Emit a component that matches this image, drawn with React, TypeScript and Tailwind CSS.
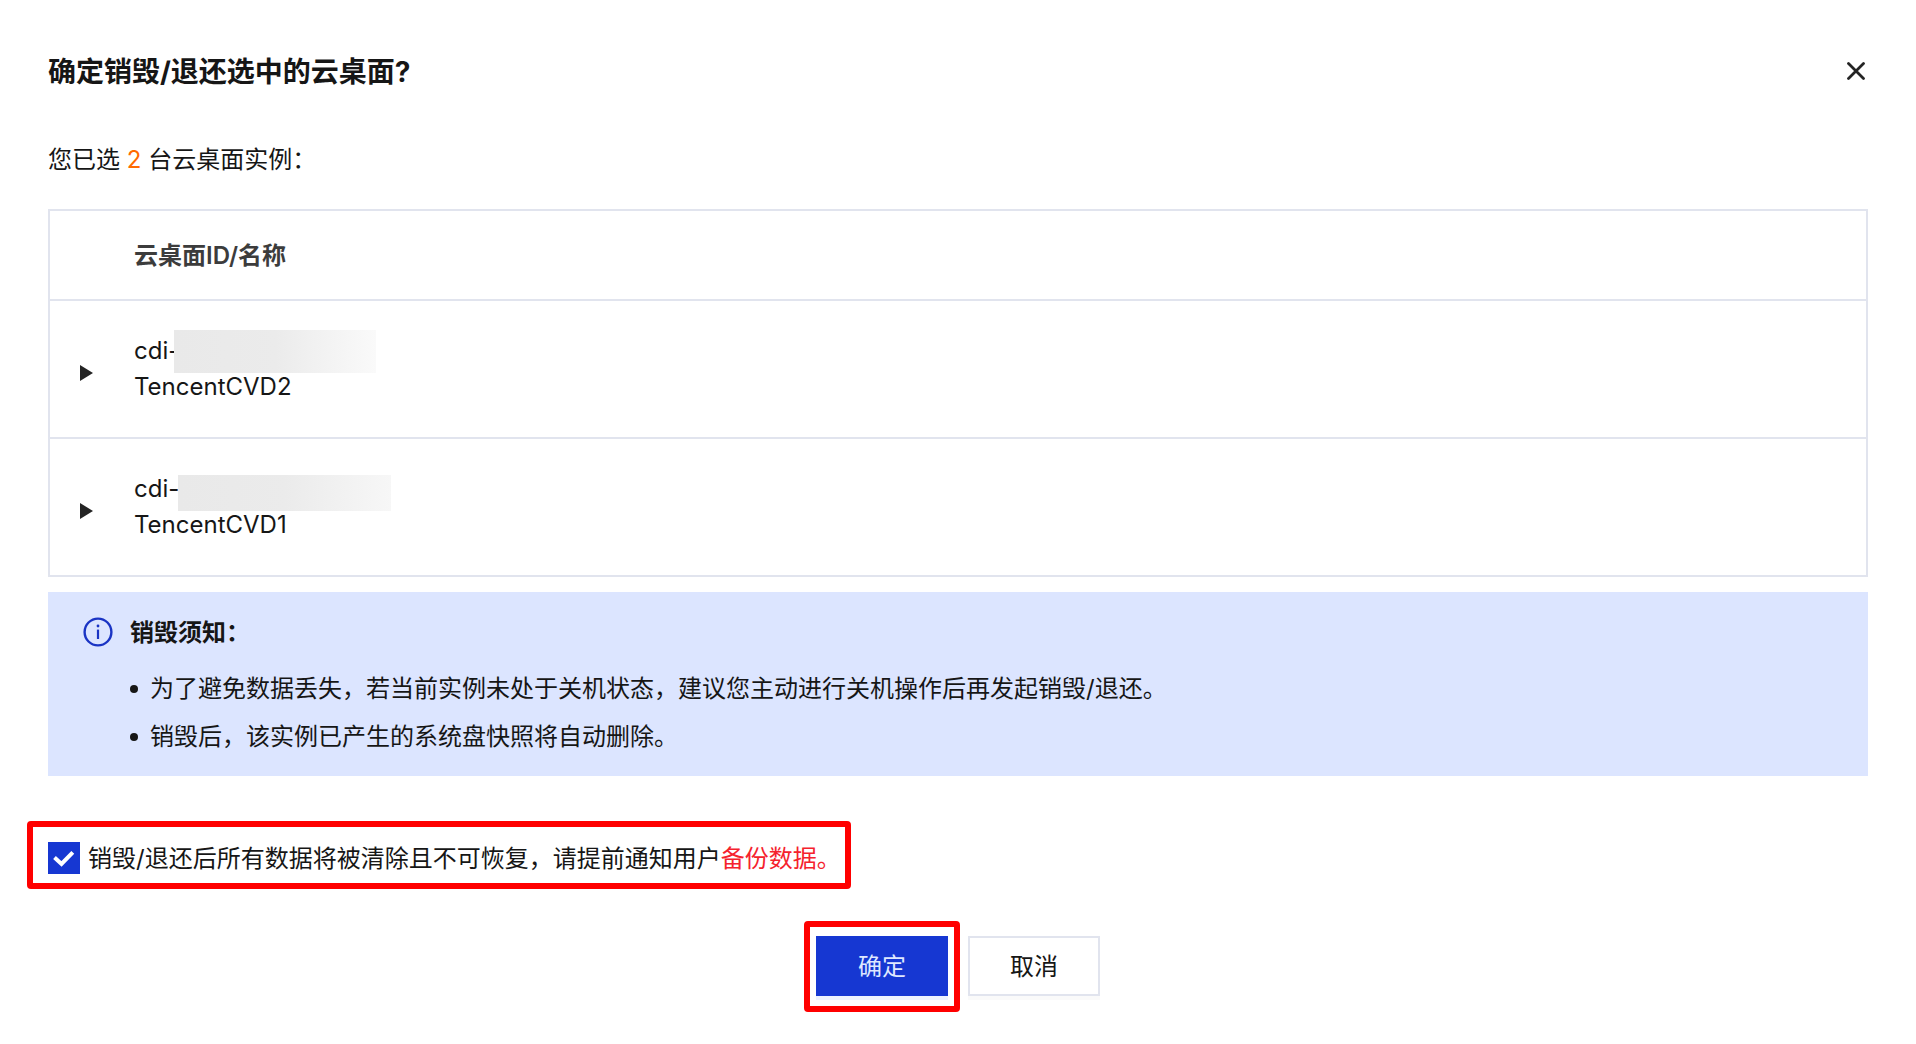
import { useState } from "react";

type Desktop = { prefix: string; name: string; mask: string };

const desktops: Desktop[] = [
  {
    prefix: "cdi-",
    name: "TencentCVD2",
    mask: "left-10 -top-[3px] h-[43px] w-[202px] from-[#e9e9e9] via-[#ebebeb] to-[#fafafa]",
  },
  {
    prefix: "cdi-",
    name: "TencentCVD1",
    mask: "left-11 top-1 h-9 w-[213px] from-[#e9e9e9] via-[#ebebeb] to-[#f7f7f7]",
  },
];

const notices = [
  "为了避免数据丢失，若当前实例未处于关机状态，建议您主动进行关机操作后再发起销毁/退还。",
  "销毁后，该实例已产生的系统盘快照将自动删除。",
];

function DesktopRow({ prefix, name, mask }: Desktop) {
  return (
    <tr className="border-t-2 border-[#e1e4ee]">
      <td className="w-[84px] pt-10 pb-8 pl-[30px]">
        <button type="button" aria-label={`展开 ${name}`} className="block">
          <svg viewBox="0 0 13 16" className="h-4 w-[13px]" fill="#242424">
            <path d="M0 0 13 8 0 16Z" />
          </svg>
        </button>
      </td>
      <td className="py-8">
        <div className="relative">
          {prefix}
          <span className={`absolute bg-linear-to-r ${mask}`} />
        </div>
        <div>{name}</div>
      </td>
    </tr>
  );
}

export default function App() {
  const [checked, setChecked] = useState(true);
  return (
    <main
      lang="zh-CN"
      className="bg-white px-12 pt-[50px] pb-8 font-['Inter','Noto_Sans_CJK_SC',sans-serif] text-2xl leading-9 text-[#161616]"
    >
      <header className="flex items-center justify-between">
        <h1 className="pt-0.5 text-[28px] leading-10 font-bold">确定销毁/退还选中的云桌面?</h1>
        <button type="button" aria-label="关闭" className="p-[3px]">
          <svg viewBox="0 0 18 18" className="size-[18px]" stroke="#242424" strokeWidth="2.8" strokeLinecap="round">
            <path d="M1.5 1.5 16.5 16.5M16.5 1.5 1.5 16.5" />
          </svg>
        </button>
      </header>

      <p className="mt-[50px]">
        您已选 <span className="text-[#ff6a00]">2</span> 台云桌面实例：
      </p>

      <div className="mt-[31px] border-2 border-[#e1e4ee]">
        <table className="w-full border-collapse text-left">
          <thead>
            <tr>
              <th className="w-[84px]" aria-label="展开" />
              <th className="pt-[27px] pb-[25px] font-semibold text-[#3c3c3c]">云桌面ID/名称</th>
            </tr>
          </thead>
          <tbody>
            {desktops.map((d) => (
              <DesktopRow key={d.name} {...d} />
            ))}
          </tbody>
        </table>
      </div>

      <section className="mt-[15px] flex gap-4 bg-[#dce5ff] pt-5 pb-[15px] pl-[34px]">
        <svg viewBox="0 0 32 32" className="mt-1 size-8 shrink-0" fill="none" stroke="#1a34c4">
          <circle cx="16" cy="16" r="13.4" strokeWidth="2.4" />
          <path d="M16 13.6V23" strokeWidth="2.2" />
          <circle cx="16" cy="10" r="1.4" fill="#1a34c4" stroke="none" />
        </svg>
        <div>
          <h2 className="leading-[42px] font-semibold">销毁须知：</h2>
          <ul className="mt-[11px]">
            {notices.map((n) => (
              <li key={n} className="flex items-center gap-3 leading-[48px]">
                <span className="size-2 rounded-full bg-[#161616]" />
                {n}
              </li>
            ))}
          </ul>
        </div>
      </section>

      <div className="mt-[63px] flex">
        <div className="relative">
          <label className="flex items-center gap-2 py-0.5">
            <span className="relative size-8">
              <input
                type="checkbox"
                checked={checked}
                onChange={(e) => setChecked(e.target.checked)}
                className="block size-8 appearance-none border-2 border-[#1637d2] bg-white checked:bg-[#1637d2]"
              />
              <svg viewBox="0 0 32 32" className="pointer-events-none absolute inset-0" fill="none" stroke="#fff" strokeWidth="4">
                <path d="M6.5 15.5 13.5 22 24.8 10.3" />
              </svg>
            </span>
            <span className="leading-8 pt-0.5">
              销毁/退还后所有数据将被清除且不可恢复，请提前通知用户
              <span className="text-[#f5222d]">备份数据。</span>
            </span>
          </label>
          <span className="pointer-events-none absolute -top-[18px] -right-2.5 -bottom-3 -left-[21px] rounded border-6 border-[#ff0000]" />
        </div>
      </div>

      <footer className="mt-[59px] flex justify-center gap-5">
        <div className="relative">
          <button type="button" className="block h-[60px] w-[132px] bg-[#1637d2] pt-0.5 text-[#dfe8ff] shadow-[0_4px_0_#edf2ff]">
            确定
          </button>
          <span className="pointer-events-none absolute -top-[15px] -right-3 -bottom-4 -left-3 rounded border-6 border-[#ff0000]" />
        </div>
        <button type="button" className="h-[60px] w-[132px] border-2 border-[#e1e4ee] bg-white pt-0.5 shadow-[0_4px_0_#fafafa]">
          取消
        </button>
      </footer>
    </main>
  );
}
